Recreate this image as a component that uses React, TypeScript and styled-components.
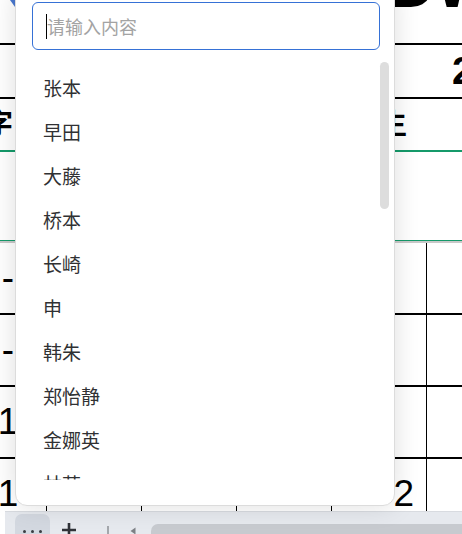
import React from "react";
import styled, { createGlobalStyle } from "styled-components";

const GlobalStyle = createGlobalStyle`
  html, body { margin: 0; padding: 0; background: #fff; }
  body { font-family: "Noto Sans CJK SC", "Noto Sans", sans-serif; }
`;

const Page = styled.div`
  position: relative;
  width: 462px;
  height: 534px;
  overflow: hidden;
  display: flex;
  flex-direction: column;
  background: #fff;
`;

const Sheet = styled.div`
  flex: none;
  height: 511px;
  overflow: hidden;
  display: flex;
  flex-direction: column;
`;

const Band = styled.div<{ $h: number; $line?: string; $lineW?: number; $align?: string }>`
  flex: none;
  height: ${(p) => p.$h}px;
  border-bottom: ${(p) => p.$lineW ?? 2}px solid ${(p) => p.$line ?? "#000"};
  display: flex;
  align-items: ${(p) => p.$align ?? "center"};
  overflow: hidden;
`;

const FrozenEdge = styled.div`
  flex: none;
  height: 2px;
  background: #c9c9c9;
`;

const Corner = styled.div`
  flex: none;
  width: 0;
  height: 0;
  margin-left: 10px;
  border-top: 7px solid #4a78cf;
  border-left: 5px solid transparent;
`;

const BigTitle = styled.span`
  font-family: "Liberation Sans", Arial, sans-serif;
  font-weight: 700;
  font-size: 64px;
  line-height: 64px;
  color: #000;
  margin-top: -47px;
  margin-left: 374px;
  white-space: nowrap;
`;

const BoldNum = styled.span<{ $indent: number }>`
  font-family: "Liberation Sans", Arial, sans-serif;
  font-weight: 700;
  font-size: 39px;
  color: #000;
  margin-left: ${(p) => p.$indent}px;
  white-space: nowrap;
`;

const HeadText = styled.span<{ $ml?: string; $mr?: string }>`
  font-family: "Noto Sans CJK SC", sans-serif;
  font-weight: 700;
  font-size: 28px;
  line-height: 1;
  color: #000;
  margin-left: ${(p) => p.$ml ?? "0"};
  margin-right: ${(p) => p.$mr ?? "0"};
  margin-top: -6px;
  white-space: nowrap;
`;

const GridRow = styled.div`
  flex: none;
  height: 70px;
  border-bottom: 2px solid #000;
  display: grid;
  grid-template-columns: 47px 95px 95px 95px 95px 1fr;
`;

const Cell = styled.div<{ $justify?: string; $pl?: number; $pr?: number }>`
  box-sizing: border-box;
  border-right: 1px solid #000;
  display: flex;
  align-items: center;
  justify-content: ${(p) => p.$justify ?? "center"};
  padding-left: ${(p) => p.$pl ?? 0}px;
  padding-right: ${(p) => p.$pr ?? 0}px;
  font-family: "Liberation Sans", Arial, sans-serif;
  font-size: 37px;
  color: #000;
  overflow: hidden;
  &:last-child { border-right: none; }
`;

const BottomBar = styled.div`
  flex: none;
  height: 40px;
  margin-left: 5px;
  background: #e6e9ee;
  border-top: 1px solid #d8dbe0;
  display: flex;
  align-items: center;
`;

const MoreButton = styled.div`
  flex: none;
  width: 35px;
  height: 34px;
  margin-left: 10px;
  margin-top: -2px;
  border-radius: 7px;
  background: #d3d8e0;
  display: flex;
  align-items: center;
  justify-content: center;
  gap: 5px;
`;

const Dot = styled.span`
  width: 3px;
  height: 3px;
  border-radius: 50%;
  background: #3a3d42;
`;

const PlusIcon = styled.svg`
  flex: none;
  margin-left: 11px;
  margin-top: -5px;
`;

const Divider = styled.span`
  flex: none;
  width: 2px;
  height: 18px;
  margin-left: 30px;
  margin-top: 5px;
  background: #a4a7ac;
`;

const ArrowIcon = styled.svg`
  flex: none;
  margin-left: 21px;
  margin-top: -2px;
`;

const Track = styled.div`
  flex: 1;
  height: 22px;
  margin-left: 15px;
  margin-top: 5px;
  border-radius: 7px 0 0 7px;
  background: #c7cacf;
`;

const Popup = styled.div`
  position: absolute;
  left: 15px;
  top: -12px;
  width: 380px;
  height: 518px;
  box-sizing: border-box;
  background: #fff;
  border: 1px solid #dcdcdc;
  border-radius: 12px;
  box-shadow: 0 0 26px rgba(0, 0, 0, 0.13);
  padding-top: 13px;
  display: flex;
  flex-direction: column;
`;

const SearchBox = styled.div`
  flex: none;
  width: 348px;
  height: 48px;
  margin-left: 16px;
  box-sizing: border-box;
  border: 1px solid #3671d6;
  border-radius: 6px;
  padding-left: 13px;
  display: flex;
  align-items: center;
`;

const Caret = styled.span`
  flex: none;
  width: 1px;
  height: 25px;
  background: #000;
  margin-top: 1px;
`;

const Placeholder = styled.span`
  font-size: 18px;
  color: #a3a3a3;
`;

const ListWrap = styled.div`
  position: relative;
  flex: none;
  height: 424px;
  margin-top: 6px;
  overflow: hidden;
`;

const List = styled.ul`
  list-style: none;
  margin: 0;
  padding: 9px 0 0 0;
`;

const Item = styled.li`
  height: 44px;
  padding-left: 27px;
  display: flex;
  align-items: center;
  font-size: 19px;
  color: #303133;
`;

const Thumb = styled.div`
  position: absolute;
  right: 5px;
  top: 6px;
  width: 9px;
  height: 147px;
  border-radius: 5px;
  background: #dddddd;
`;

const names = [
  "张本", "早田", "大藤", "桥本", "长崎", "申", "韩朱", "郑怡静", "金娜英", "林茵",
  "伊藤", "平野", "陈梦", "孙颖莎", "王曼昱",
];

const gridRows: [string, string][] = [
  ["-", ""],
  ["-", ""],
  ["1", ""],
  ["1", "2"],
];

export default function App() {
  return (
    <>
      <GlobalStyle />
      <Page>
        <Sheet>
          <Band $h={43} $align="flex-start">
            <Corner />
            <BigTitle>DW</BigTitle>
          </Band>
          <Band $h={52}>
            <BoldNum $indent={452}>2</BoldNum>
          </Band>
          <Band $h={51} $line="#159a6a">
            <HeadText $ml="-15px">字</HeadText>
            <HeadText $ml="auto" $mr="55px">生</HeadText>
          </Band>
          <Band $h={88} $line="#159a6a" $lineW={1} />
          <FrozenEdge />
          {gridRows.map(([first, fifth], i) => (
            <GridRow key={i}>
              <Cell $pr={30}>{first}</Cell>
              <Cell />
              <Cell />
              <Cell />
              <Cell $justify="flex-end" $pr={12}>{fifth}</Cell>
              <Cell />
            </GridRow>
          ))}
        </Sheet>
        <BottomBar>
          <MoreButton>
            <Dot />
            <Dot />
            <Dot />
          </MoreButton>
          <PlusIcon width="16" height="16" viewBox="0 0 16 16">
            <path d="M8 1v14M1 8h14" stroke="#2f3237" strokeWidth="2.6" fill="none" />
          </PlusIcon>
          <Divider />
          <ArrowIcon width="6" height="8" viewBox="0 0 6 8">
            <path d="M5.5 0.5L0.5 4L5.5 7.5Z" fill="#7d8085" />
          </ArrowIcon>
          <Track />
        </BottomBar>
        <Popup>
          <SearchBox>
            <Caret />
            <Placeholder>请输入内容</Placeholder>
          </SearchBox>
          <ListWrap>
            <List>
              {names.map((n) => (
                <Item key={n}>{n}</Item>
              ))}
            </List>
            <Thumb />
          </ListWrap>
        </Popup>
      </Page>
    </>
  );
}
